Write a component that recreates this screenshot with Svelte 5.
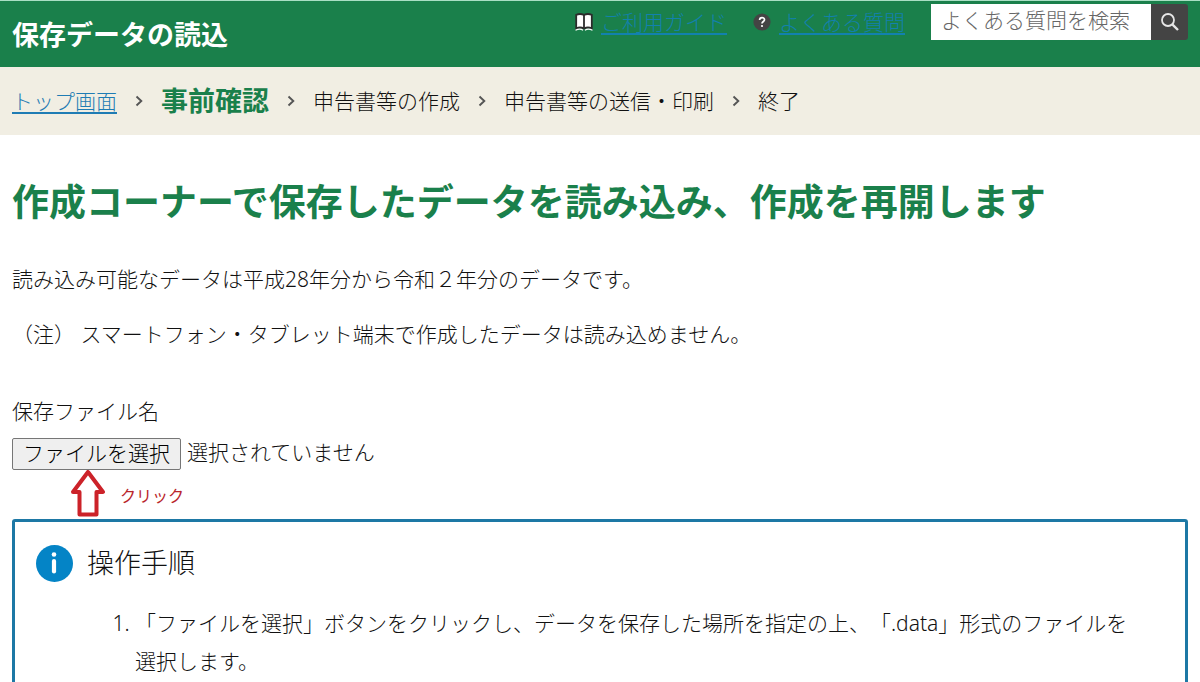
<script lang="ts">
	interface Step {
		label: string;
		href?: string;
		current?: boolean;
	}

	const steps: Step[] = [
		{ label: 'トップ画面', href: '#top' },
		{ label: '事前確認', current: true },
		{ label: '申告書等の作成' },
		{ label: '申告書等の送信・印刷' },
		{ label: '終了' }
	];

	let query = $state('');
	let fileName = $state('');
	let fileInput: HTMLInputElement;

	function updateFileName() {
		fileName = fileInput.files?.[0]?.name ?? '';
	}
</script>

<header class="header">
	<div class="title">保存データの読込</div>
	<div class="tools">
		<div class="tool">
			<svg class="tool-icon" viewBox="0 0 18 18" aria-hidden="true">
				<path
					d="M1.200 1.800Q5 .2 9 1.800Q13 .2 16.800 1.800V15.500Q13 13.500 9 15.500Q5 13.500 1.200 15.500Z"
					fill="#fff"
					stroke="#2b2b2b"
					stroke-width="1.800"
				/>
				<path d="M9 1.800v13.500" stroke="#2b2b2b" stroke-width="1.800" />
				<path
					d="M.5 17.300Q5 14.800 8 17.300M10 17.300Q13 14.800 17.500 17.300"
					fill="none"
					stroke="#fff"
					stroke-width="1.200"
				/>
			</svg>
			<a href="#guide">ご利用ガイド</a>
		</div>
		<div class="tool">
			<svg class="tool-icon" viewBox="0 0 18 18" aria-hidden="true">
				<circle cx="9" cy="9" r="8.600" fill="#444" />
				<path
					d="M6.600 7C6.600 3.800 11.500 3.800 11.500 6.700 11.500 8.500 9 8.500 9 10.600"
					fill="none"
					stroke="#fff"
					stroke-width="1.700"
				/>
				<circle cx="9" cy="13" r="1.100" fill="#fff" />
			</svg>
			<a href="#faq">よくある質問</a>
		</div>
		<form class="search" onsubmit={(e) => e.preventDefault()}>
			<input
				type="text"
				bind:value={query}
				placeholder="よくある質問を検索"
				aria-label="よくある質問を検索"
			/>
			<button type="submit" aria-label="検索">
				<svg viewBox="0 0 20 20" aria-hidden="true">
					<circle cx="8" cy="8" r="6" fill="none" stroke="#e6e6e6" stroke-width="1.800" />
					<path d="M12.300 12.300L18 18" stroke="#e6e6e6" stroke-width="2.400" />
				</svg>
			</button>
		</form>
	</div>
</header>

<nav class="steps">
	{#each steps as step, i}
		{#if i > 0}
			<svg class="chevron" viewBox="0 0 8 12" aria-hidden="true">
				<path d="M1.500 1.500L6.300 6L1.500 10.500" fill="none" stroke="#555" stroke-width="1.900" />
			</svg>
		{/if}
		{#if step.href}
			<a href={step.href}>{step.label}</a>
		{:else}
			<span class:current={step.current}>{step.label}</span>
		{/if}
	{/each}
</nav>

<main class="content">
	<h1>作成コーナーで保存したデータを読み込み、作成を再開します</h1>
	<p>読み込み可能なデータは平成28年分から令和２年分のデータです。</p>
	<p>（注） スマートフォン・タブレット端末で作成したデータは読み込めません。</p>

	<label class="file-label" for="save-file">保存ファイル名</label>
	<div class="file-row">
		<input id="save-file" type="file" hidden bind:this={fileInput} onchange={updateFileName} />
		<button type="button" onclick={() => fileInput.click()}>ファイルを選択</button>
		<span>{fileName || '選択されていません'}</span>
	</div>

	<div class="hint">
		<svg class="arrow" viewBox="0 0 36 48" aria-hidden="true">
			<path
				d="M18 2L33 22H26.500V44.500H9.500V22H3Z"
				fill="#fff"
				stroke="#cc2229"
				stroke-width="4"
				stroke-linejoin="round"
			/>
		</svg>
		<span>クリック</span>
	</div>

	<section class="guide">
		<div class="guide-head">
			<svg class="info" viewBox="0 0 37 37" aria-hidden="true">
				<circle cx="18.500" cy="18.500" r="18.500" fill="#0484c6" />
				<circle cx="18" cy="9.500" r="2.300" fill="#fff" />
				<path d="M18 16v10.500" stroke="#fff" stroke-width="4.200" stroke-linecap="round" />
			</svg>
			<h2>操作手順</h2>
		</div>
		<ol>
			<li>
				「ファイルを選択」ボタンをクリックし、データを保存した場所を指定の上、「.data」形式のファイルを選択します。
			</li>
		</ol>
	</section>
</main>

<style>
	:global(body) {
		background: #fff;
		color: #111;
		font-family: 'Noto Sans', 'Noto Sans CJK JP', sans-serif;
		font-size: 21px;
		font-weight: 300;
		line-height: 38px;
		text-spacing-trim: space-all;
	}

	a {
		color: #1f7cb4;
		text-decoration: underline;
		text-underline-offset: 3px;
	}

	button,
	input {
		box-sizing: border-box;
		font: inherit;
	}

	.header {
		display: flex;
		justify-content: space-between;
		align-items: flex-start;
		box-sizing: border-box;
		height: 67px;
		padding: 3px 12px 0;
		border-top: 1px solid #a9dfc4;
		background: #1a804b;
	}

	.title {
		padding-top: 12px;
		color: #fff;
		font-size: 27px;
		font-weight: 700;
	}

	.tools {
		display: flex;
		align-items: flex-start;
		gap: 26px;
	}

	.tool {
		display: flex;
		align-items: center;
		gap: 8px;
		line-height: 36px;
	}

	.tool a {
		color: #1281ae;
	}

	.tool-icon {
		width: 18px;
		height: 18px;
	}

	.search {
		display: flex;
		height: 36px;
	}

	.search input {
		width: 220px;
		padding: 0 10px 4px;
		border: 0;
		background: #fff;
		color: #333;
	}

	.search input::placeholder {
		color: #666;
	}

	.search button {
		display: flex;
		align-items: center;
		justify-content: center;
		width: 37px;
		padding: 0;
		border: 0;
		border-radius: 0 3px 3px 0;
		background: #444;
		cursor: pointer;
	}

	.search svg {
		width: 20px;
		height: 20px;
	}

	.steps {
		display: flex;
		align-items: center;
		gap: 18px;
		height: 68px;
		padding: 0 12px;
		background: #f1eee3;
	}

	.current {
		color: #1a804b;
		font-size: 27px;
		font-weight: 700;
	}

	.chevron {
		width: 8px;
		height: 12px;
	}

	.content {
		padding: 42px 12px 0;
	}

	h1 {
		margin: 0 0 33px;
		color: #1a804b;
		font-size: 37px;
		font-weight: 700;
		line-height: 50px;
	}

	p {
		margin: 0 0 17px;
	}

	.file-label {
		display: block;
		margin: 39px 0 8px;
	}

	.file-row {
		display: flex;
		align-items: flex-start;
		gap: 6px;
		height: 32px;
		line-height: 28px;
	}

	.file-row button {
		height: 32px;
		padding: 0 10px 2px;
		border: 1px solid #767676;
		border-radius: 2px;
		background: #efefef;
		color: #000;
	}

	.hint {
		display: flex;
		align-items: flex-start;
		gap: 14px;
		height: 49px;
		padding-left: 58px;
		color: #b9252b;
		font-size: 16px;
		font-weight: 400;
		line-height: 52px;
	}

	.arrow {
		width: 36px;
		height: 48px;
	}

	.guide {
		padding: 22px 21px;
		border: 3px solid #1d78a5;
		border-radius: 3px;
	}

	.guide-head {
		display: flex;
		align-items: center;
		gap: 14px;
	}

	.info {
		width: 37px;
		height: 37px;
	}

	h2 {
		margin: 0;
		font-size: 27px;
		font-weight: 300;
	}

	ol {
		margin: 22px 0 0;
		padding: 0 20px 0 99px;
	}
</style>
